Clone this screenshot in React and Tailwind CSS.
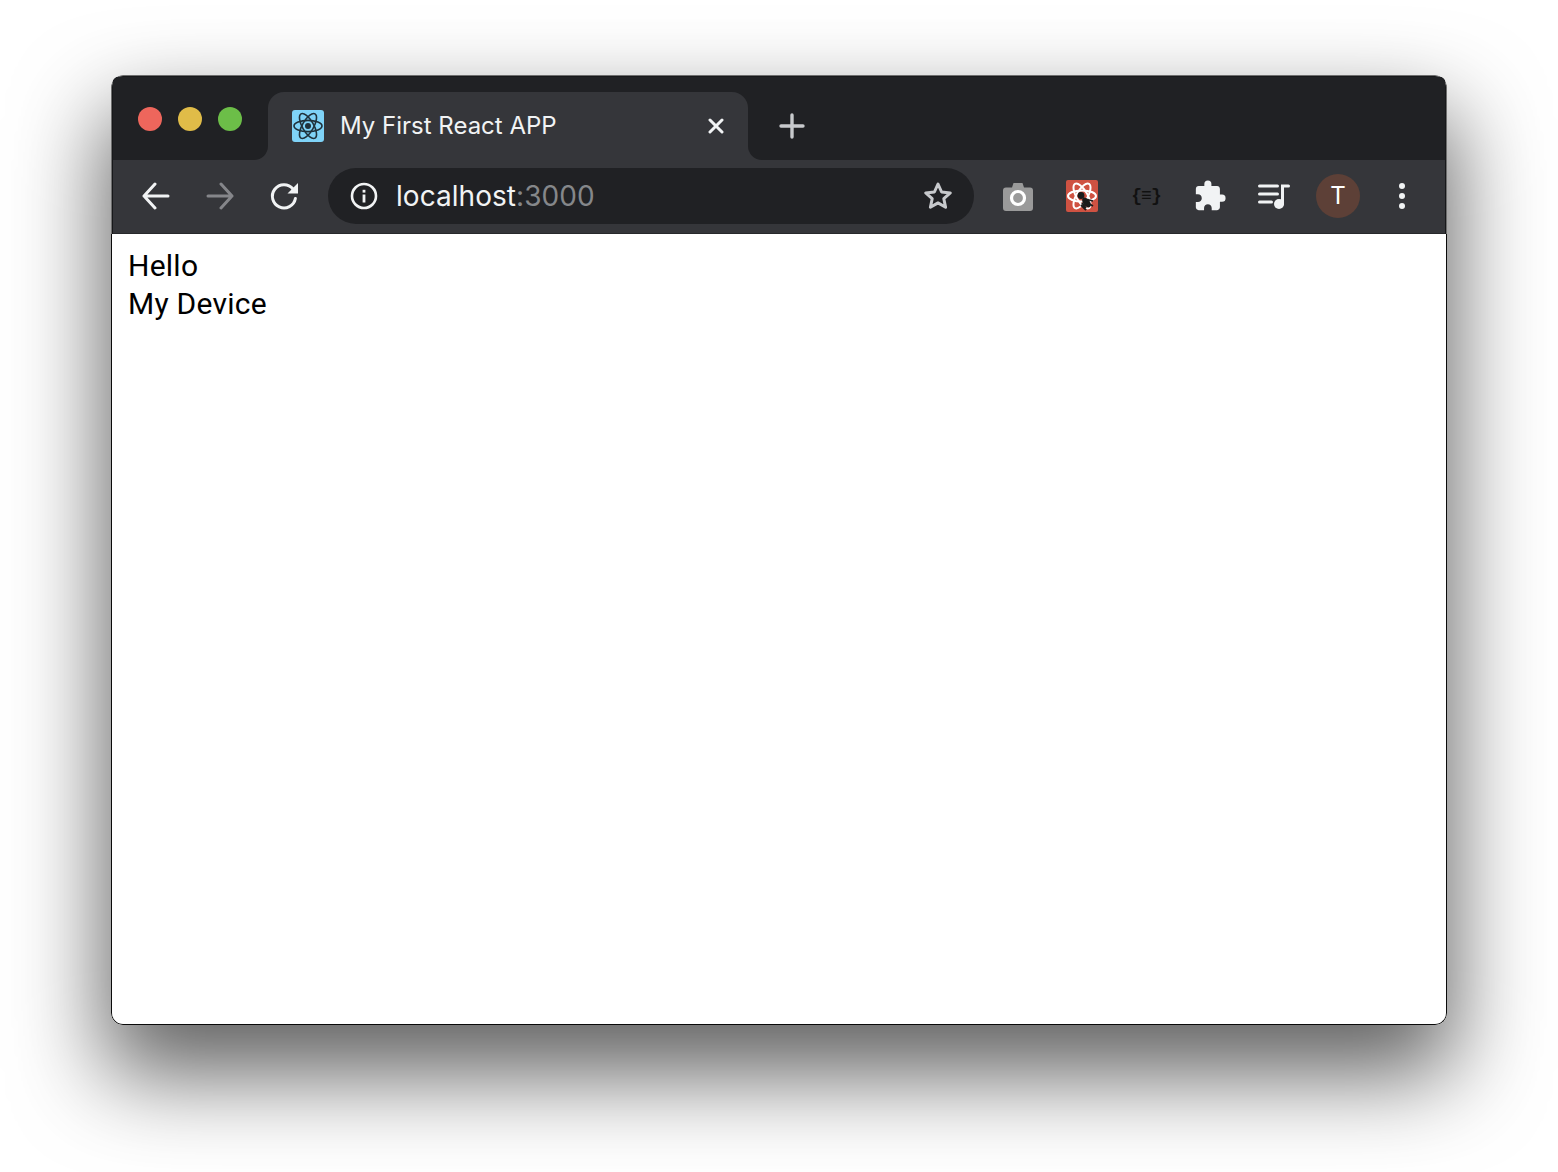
import { MdExtension } from "react-icons/md";

function Atom({ color, width = 1.6 }) {
  return (
    <g fill="none" stroke={color} strokeWidth={width}>
      <ellipse cx="16" cy="16" rx="14" ry="5.6" />
      <ellipse cx="16" cy="16" rx="14" ry="5.6" transform="rotate(60 16 16)" />
      <ellipse cx="16" cy="16" rx="14" ry="5.6" transform="rotate(120 16 16)" />
    </g>
  );
}

function ToolButton({ children }) {
  return <div className="flex h-[64px] w-[64px] shrink-0 items-center justify-center">{children}</div>;
}

function Arrow({ color, flip }) {
  return (
    <svg width="28" height="28" viewBox="0 0 28 28" fill="none" stroke={color} strokeWidth="3" strokeLinecap="round" strokeLinejoin="round" className={flip ? "-scale-x-100" : ""}>
      <path d="M2 14h24M13 2 2 14l11 12" />
    </svg>
  );
}

function TabFlare({ side }) {
  const outer = side === "left" ? "-left-[14px]" : "-right-[14px]";
  const inner = side === "left" ? "rounded-br-[14px]" : "rounded-bl-[14px]";
  return (
    <span className={`absolute bottom-0 h-[14px] w-[14px] bg-[#35363a] ${outer}`}>
      <span className={`block h-full w-full bg-[#202124] ${inner}`} />
    </span>
  );
}

export default function App() {
  return (
    <div className="flex h-[1172px] w-full items-start justify-center overflow-hidden bg-white pt-[75px] font-['Inter',sans-serif]">
      <div className="flex h-[950px] w-[1336px] flex-col overflow-hidden rounded-[12px] bg-white shadow-[0_44px_90px_6px_rgba(0,0,0,0.62)]">
        {/* chrome, with its light outer edge and dark inner edge */}
        <div className="shrink-0 rounded-t-[12px] border-x border-t border-[#6e6e6e]">
          <div className="rounded-t-[11px] border-x border-t border-[#17181a]">
            {/* tab strip */}
            <div className="flex h-[83px] items-end bg-[#202124] pl-[25px]">
              <div className="mb-[29px] mr-[26px] flex shrink-0 gap-[16px]">
                <span className="h-[24px] w-[24px] rounded-full bg-[#ee665c]" />
                <span className="h-[24px] w-[24px] rounded-full bg-[#e0bc48]" />
                <span className="h-[24px] w-[24px] rounded-full bg-[#6cbe48]" />
              </div>
              <div className="relative flex h-[68px] w-[480px] items-center rounded-t-[16px] bg-[#35363a] pl-[24px] pr-[21px]">
                <TabFlare side="left" />
                <TabFlare side="right" />
                <svg width="32" height="32" viewBox="0 0 32 32" className="shrink-0 rounded-[3px] bg-[#7fd3f7]">
                  <Atom color="#20323c" />
                  <circle cx="16" cy="16" r="3" fill="#20323c" />
                </svg>
                <span className="ml-[16px] flex-1 whitespace-nowrap text-[24px] leading-[30px] text-[#f1f3f4]">My First React APP</span>
                <svg width="16" height="16" viewBox="0 0 16 16" stroke="#f1f3f4" strokeWidth="3" strokeLinecap="round" className="mr-[3px] shrink-0">
                  <path d="m2 2 12 12M14 2 2 14" />
                </svg>
              </div>
              <div className="flex h-[68px] w-[88px] items-center justify-center">
                <svg width="26" height="26" viewBox="0 0 26 26" stroke="#c7c9cc" strokeWidth="3.4" strokeLinecap="round">
                  <path d="M13 2v22M2 13h22" />
                </svg>
              </div>
            </div>

            {/* toolbar */}
            <div className="flex h-[74px] items-center border-b border-b-[#27282b] bg-[#35363a] px-[11px] pb-[1px]">
              <ToolButton><Arrow color="#f1f3f4" /></ToolButton>
              <ToolButton><Arrow color="#85868a" flip /></ToolButton>
              <ToolButton>
                <svg width="30" height="30" viewBox="0 0 30 30" fill="none">
                  <path d="M24 8A11.6 11.6 0 1 0 26.4 17.5" stroke="#f1f3f4" strokeWidth="3" strokeLinecap="round" />
                  <path d="M29 2v10.5H18.5z" fill="#f1f3f4" />
                </svg>
              </ToolButton>

              <div className="mx-[12px] flex h-[56px] flex-1 items-center rounded-full bg-[#202124] pl-[22px] pr-[21px]">
                <svg width="28" height="28" viewBox="0 0 28 28" className="shrink-0">
                  <circle cx="14" cy="14" r="12" fill="none" stroke="#f1f3f4" strokeWidth="2.6" />
                  <rect x="12.6" y="12.5" width="2.8" height="8" fill="#f1f3f4" />
                  <rect x="12.6" y="7.8" width="2.8" height="2.8" fill="#f1f3f4" />
                </svg>
                <span className="ml-[18px] flex-1 whitespace-nowrap text-[28px] leading-[34px] tracking-[0.05px] text-[#f1f3f4]">
                  localhost<span className="text-[#85878a]">:3000</span>
                </span>
                <svg width="30" height="30" viewBox="0 0 30 30" fill="none" stroke="#c7c9cc" strokeWidth="3" strokeLinejoin="round" className="shrink-0">
                  <path d="m15 3 3.6 8 8.7.9-6.5 5.8 1.8 8.6L15 21.9l-7.6 4.4 1.8-8.6-6.5-5.8 8.7-.9z" />
                </svg>
              </div>

              {/* extensions */}
              <ToolButton>
                <svg width="30" height="28" viewBox="0 0 30 28" className="mt-[1px] blur-[0.5px]">
                  <path d="M9 4.5 10.5 0h9L21 4.5h6a3 3 0 0 1 3 3V25a3 3 0 0 1-3 3H3a3 3 0 0 1-3-3V7.5a3 3 0 0 1 3-3z" fill="#9a9a9a" />
                  <circle cx="15" cy="15" r="6.5" fill="none" stroke="#fff" strokeWidth="3.2" />
                </svg>
              </ToolButton>
              <ToolButton>
                <svg width="32" height="32" viewBox="0 0 32 32" className="rounded-[2px] bg-[#cf5242]">
                  <Atom color="#fff" width="2" />
                  <g fill="#1b1b1b">
                    <circle cx="15" cy="15.5" r="3.4" />
                    <ellipse cx="20.5" cy="22.5" rx="3.4" ry="5.6" transform="rotate(-38 20.5 22.5)" />
                    <path d="m16 23 4 5M19 19l8 2M15 25l5 5M18 21l9 5" stroke="#1b1b1b" strokeWidth="1.8" fill="none" />
                  </g>
                </svg>
              </ToolButton>
              <ToolButton>
                <span className="font-['Liberation_Mono',monospace] text-[18px] font-bold tracking-[-1px] text-[#111]">{"{≡}"}</span>
              </ToolButton>
              <ToolButton>
                <MdExtension size={34} color="#f1f3f4" />
              </ToolButton>
              <ToolButton>
                <svg width="32" height="26" viewBox="0 0 32 26" fill="none">
                  <path d="M1.5 3h18M1.5 11h18M1.5 19h12" stroke="#f1f3f4" strokeWidth="3" strokeLinecap="round" />
                  <path d="M24.5 21V3h6" stroke="#f1f3f4" strokeWidth="3" strokeLinecap="round" />
                  <circle cx="21" cy="21" r="5" fill="#f1f3f4" />
                </svg>
              </ToolButton>
              <ToolButton>
                <div className="flex h-[44px] w-[44px] items-center justify-center rounded-full bg-[#5d4037] text-[24px] leading-none text-white">T</div>
              </ToolButton>
              <ToolButton>
                <div className="flex flex-col gap-[4px]">
                  <span className="h-[6px] w-[6px] rounded-full bg-[#f1f3f4]" />
                  <span className="h-[6px] w-[6px] rounded-full bg-[#f1f3f4]" />
                  <span className="h-[6px] w-[6px] rounded-full bg-[#f1f3f4]" />
                </div>
              </ToolButton>
            </div>
          </div>
        </div>

        {/* page */}
        <div className="flex-1 rounded-b-[12px] border-x border-b border-[#0a0a0a] bg-white px-[16px] pt-[13px] font-['Roboto',sans-serif] text-[30px] leading-[38px] tracking-[0.25px] text-black">
          <div>Hello</div>
          <div>My Device</div>
        </div>
      </div>
    </div>
  );
}
